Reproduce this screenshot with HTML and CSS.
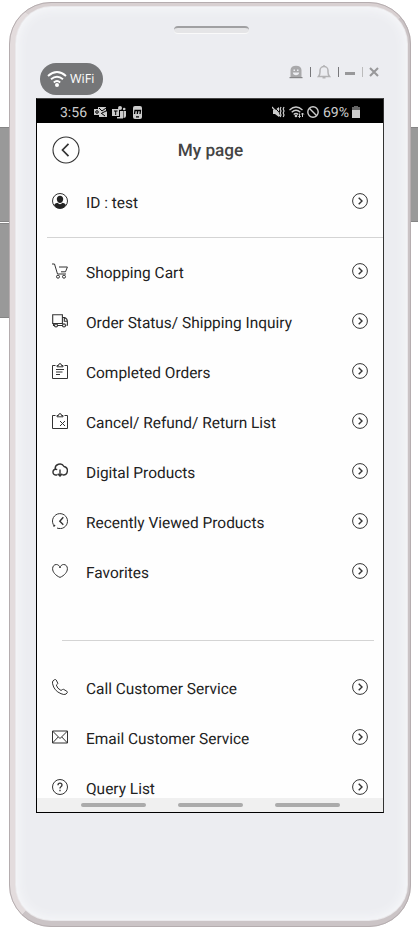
FILE: index.html
```html
<!DOCTYPE html>
<html lang="en">
<head>
<meta charset="utf-8">
<title>My page</title>
<link rel="stylesheet" href="styles.css">
</head>
<body>
<svg class="defs" width="0" height="0">
  <symbol id="go" viewBox="0 0 16 16"><circle cx="8" cy="8" r="7.4"/><path stroke-width="1.4" d="M6.7 4.7 10 8l-3.3 3.3"/></symbol>
</svg>
<div class="device">
  <div class="rail"><i class="key"></i><i class="key"></i></div>
  <div class="phone">
    <div class="speaker"></div>
    <header class="tools">
      <div class="wifi">
        <svg width="20" height="18" viewBox="0 0 20 18" fill="none" stroke="#fff" stroke-width="1.9"><path d="M1 6Q10-1.8 19 6M4 9.3q6-5 12 0M6.8 12.4q3.2-2.6 6.4 0"/><circle cx="10" cy="15" r="2" fill="#fff" stroke="none"/></svg>
        <span>WiFi</span>
      </div>
      <div class="window">
        <svg width="14" height="14" viewBox="0 0 14 14"><path fill="#a9a9ab" d="M1.500 12V5Q2 .8 7 .8T12.500 5v7z"/><path fill="#858587" d="M.5 12h13v1.2H.5z"/><path fill="#ecedf1" d="M4.500 4.500h1.500v1.500H4.500zM8 4.500h1.500v1.500H8zM3.800 7.500h6.400Q9.800 10.300 7 10.300T3.800 7.500z"/></svg>
        <i class="sep"></i>
        <svg width="14" height="14" viewBox="0 0 14 14" fill="none" stroke="#b3b3b5" stroke-width="1.5"><path d="M1.500 11.500Q3 9.800 3 7V5.500a4 4 0 0 1 8 0V7q0 2.800 1.500 4.500zM7 0v2M5.500 12.800h3"/></svg>
        <i class="sep"></i>
        <i class="minimize"></i>
        <i class="sep light"></i>
        <svg width="10" height="10" viewBox="0 0 10 10" fill="none" stroke="#98989a" stroke-width="2.1"><path d="m1 1 8 8M9 1 1 9"/></svg>
      </div>
    </header>
    <main class="screen">
      <div class="status">
        <span>3:56</span>
        <svg class="s-mail" width="13" height="12" viewBox="0 0 13 12"><path fill="#ccc" d="M4 1h8v4l1 1v5H5V9H0V3h4z"/><path fill="none" stroke="#000" d="M5 2l3 3 4-3M7 7l4 3M8 7l4-2"/><circle cx="3" cy="6" r="1.3" fill="none" stroke="#000"/></svg>
        <svg class="s-teams" width="14" height="13" viewBox="0 0 14 13"><path fill="#ccc" d="M0 3h7v7H0zM8 5h3v7.500H5V11h3zM11.500 5H14v5q0 2-2.500 2z"/><circle cx="8" cy="2" r="2" fill="#ccc"/><circle cx="12.2" cy="3" r="1.3" fill="#ccc"/><path stroke="#000" d="M2 5h3.500M3.700 5v4"/></svg>
        <svg class="s-app" width="9" height="13" viewBox="0 0 9 13"><rect width="9" height="13" rx="2" fill="#ccc"/><path fill="none" stroke="#000" stroke-width="1.3" d="M1.500 8 2 4.500h5.500L7 8M4.700 4.500 4.300 8M3 10.800h3"/></svg>
        <div class="status-right">
          <svg width="13" height="12" viewBox="0 0 13 12"><path fill="#ccc" d="M1 4h2l4-3v10L3 8H1z"/><path stroke="#000" d="M1.500 0l8 9"/><path fill="none" stroke="#ccc" stroke-width="1.2" d="M0 1l8 9"/><path fill="none" stroke="#ccc" stroke-width="1.2" d="M9 1l-.8 2 .8 2-.8 2 .8 2-.8 2M12 1l-.8 2 .8 2-.8 2 .8 2-.8 2"/></svg>
          <svg class="s-wifi" width="16" height="12" viewBox="0 0 16 12" fill="none" stroke="#ccc" stroke-width="1.3"><path d="M.5 4q6.500-6 13 0M2.700 6.300q4.300-4 8.600 0M4.700 8.500q2.300-2 4.600 0"/><path stroke-width="1" d="M10.500 7.500v4M9.300 10.200l1.200 1.300 1.200-1.300M13.500 11V7M12.200 8.500l1.300-1.500 1.300 1.500"/><circle cx="7" cy="10" r=".7"/></svg>
          <svg class="s-block" width="12" height="12" viewBox="0 0 12 12" fill="none" stroke="#ccc" stroke-width="1.4"><circle cx="6" cy="6" r="5.2"/><path d="m2.300 2.300 7.400 7.400"/></svg>
          <span>69%</span>
          <svg class="s-batt" width="8" height="12" viewBox="0 0 8 12"><path fill="#666" d="M2 0h4v1h2v4H0V1h2z"/><path fill="#ccc" d="M0 4h8v8H0z"/></svg>
        </div>
      </div>
      <div class="title">
        <svg width="28" height="28" viewBox="0 0 28 28" fill="none" stroke="#333"><circle cx="14" cy="14" r="13" stroke-width="1.1"/><path stroke-width="1.7" d="m16.500 7.900-6 6.100 6 6.100"/></svg>
        <h1>My page</h1>
      </div>
      <div class="list">
        <div class="row">
          <svg class="icon" viewBox="0 0 16 16"><circle cx="8" cy="8" r="7.5"/><path fill="#222" stroke="none" d="M8 2.700a3.200 3.200 0 0 1 3.200 3.500C11 8.400 9.700 10 8 10S5 8.400 4.800 6.200A3.200 3.200 0 0 1 8 2.700zM2 12q1-2 3.500-2.200Q8 12.500 10.500 9.800 13 10 14 12q-2 3.500-6 3.500T2 12z"/></svg>
          <span>ID : test</span><svg class="icon"><use href="#go"/></svg>
        </div>
        <hr class="wide">
        <div class="row">
          <svg class="icon" viewBox="0 0 16 16"><path d="M0 1h2.500l3 10H14M7 4h8.400L13.500 8.800H9"/><circle cx="6" cy="13.7" r="1.5"/><circle cx="12" cy="13.7" r="1.5"/></svg>
          <span>Shopping Cart</span><svg class="icon"><use href="#go"/></svg>
        </div>
        <div class="row">
          <svg class="icon" viewBox="0 0 16 16" stroke-width="1.1"><path d="M2.500 10.500H.7V1.800h9.700v8.700H.7M10.400 4.500h2.200q2.800 1.200 2.800 4v3.700h-1M12.300 5v3.300h3"/><path d="M1.500 10.500v2h1M5.700 12.500h4.800"/><circle cx="4" cy="12.4" r="1.5"/><circle cx="12" cy="12.4" r="1.5"/></svg>
          <span>Order Status/ Shipping Inquiry</span><svg class="icon"><use href="#go"/></svg>
        </div>
        <div class="row">
          <svg class="icon" viewBox="0 0 16 16"><path d="M3.500 2.500h-3v13h15v-13h-3M5 3.800h6V2.500H9.500Q9.500.6 8 .6T6.500 2.500H5zM4 6.500h8M4 9h6.500M4 11.500h4"/></svg>
          <span>Completed Orders</span><svg class="icon"><use href="#go"/></svg>
        </div>
        <div class="row">
          <svg class="icon" viewBox="0 0 16 16"><path d="M3.500 2.500h-3v13h15v-13h-3M5 3.800h6V2.500H9.500Q9.500.6 8 .6T6.500 2.500H5zM8 8l5 5M13 8l-5 5"/></svg>
          <span>Cancel/ Refund/ Return List</span><svg class="icon"><use href="#go"/></svg>
        </div>
        <div class="row">
          <svg class="icon" viewBox="0 0 16 16" stroke-width="1.4"><path d="M5.300 12H3.500a2.900 2.900 0 0 1-.3-5.700A4.700 4.700 0 0 1 12 3.500a4.300 4.300 0 0 1-.8 8.500h-.7M3.200 6.300q1-.3 2 .3M8 6.500V13M5.700 10.800 8 13l2.300-2.200"/></svg>
          <span>Digital Products</span><svg class="icon"><use href="#go"/></svg>
        </div>
        <div class="row">
          <svg class="icon" viewBox="0 0 16 16"><path d="M2.300 13A7.500 7.500 0 1 1 5 15M6.500 15.400h1"/><path stroke-width="1.4" d="m11.300 4.300-3.500 3.900 3.500 3.500"/><path stroke-width="1.5" d="M1.500 13.500 3 12"/></svg>
          <span>Recently Viewed Products</span><svg class="icon"><use href="#go"/></svg>
        </div>
        <div class="row">
          <svg class="icon" viewBox="0 0 16 16"><path d="M8 14.400C3.500 12.500.6 9 .6 5.700.6 3.200 2.200 1.500 4.300 1.500 6.300 1.500 7.700 3 8 5c.3-2 1.700-3.500 3.700-3.500 2.100 0 3.700 1.700 3.700 4.200 0 3.300-2.900 6.800-7.400 8.700z"/></svg>
          <span>Favorites</span><svg class="icon"><use href="#go"/></svg>
        </div>
        <hr class="inset">
        <div class="row">
          <svg class="icon" viewBox="0 0 16 16"><path d="M1 1.800 2.700.6q.9-.4 1.500.4l1.500 3q.3.800-.4 1.300l-1 .8q.7 3.200 4.700 5.400l1.500-1q.6-.4 1.200-.1l3.200 1.900q.8.500.4 1.300l-1.300 1.500q-2 1-5-.4Q2 11.800.6 4.800.2 2.700 1 1.800z"/></svg>
          <span>Call Customer Service</span><svg class="icon"><use href="#go"/></svg>
        </div>
        <div class="row">
          <svg class="icon" viewBox="0 0 16 16"><path d="M.5 2h15v12H.5zM.5 2 8 9.500 15.500 2M.5 14l5.700-6M15.500 14 9.800 8"/></svg>
          <span>Email Customer Service</span><svg class="icon"><use href="#go"/></svg>
        </div>
        <div class="row">
          <svg class="icon" viewBox="0 0 16 16"><circle cx="8" cy="8" r="7.5"/><path stroke-width="1.3" d="M6 6.200Q6 4.200 8 4.200t2 1.900Q10 7 8.900 7.800 8 8.400 8 9.500M8 10.800v1.400"/></svg>
          <span>Query List</span><svg class="icon"><use href="#go"/></svg>
        </div>
      </div>
      <nav><i></i><i></i><i></i></nav>
    </main>
  </div>
  <div class="rail"><i class="key"></i></div>
</div>
</body>
</html>
```

FILE: styles.css
```css
* { box-sizing: border-box; }

body {
  margin: 0;
  background: #fff;
  font-family: Roboto, "Liberation Sans", sans-serif;
  text-rendering: geometricPrecision;
  overflow: hidden;
}

svg { display: block; flex: none; }
.defs { display: none; }

.device {
  display: grid;
  grid-template-columns: 9px 402px 7px;
  width: 418px;
  height: 930px;
}

.rail {
  display: flex;
  flex-direction: column;
  gap: 1px;
  padding-top: 127px;
}

.key {
  height: 95px;
  background: #999;
  border: 1px solid #858585;
  border-width: 1px 0;
}

.phone {
  height: 925px;
  margin-top: 2px;
  padding: 20px 24px 0 21px;
  border: 1px solid;
  border-width: 4px 3px 6px 6px;
  border-color: #d8d0d1 #cac3c5 #cbc4c6 #e3dcdd;
  border-radius: 42px;
  background: #ecedf1;
  box-shadow: inset 0 0 12px 2px #f8f9fb, inset 0 0 0 1px #d5d0d2;
  outline: 1px solid #b5adaf;
  outline-offset: -1px;
}

.speaker {
  width: 75px;
  height: 8px;
  margin-left: 138px;
  border-radius: 4px;
  border-top: 2px solid #a0a0a2;
  border-bottom: 1px solid #fafafa;
  background: #e5e5e7;
}

.tools {
  display: flex;
  justify-content: space-between;
  height: 32px;
  margin: 29px 5px 3px 4px;
}

.wifi {
  display: flex;
  align-items: center;
  gap: 3px;
  width: 63px;
  padding-left: 7px;
  border-radius: 16px;
  background: #757678;
  color: #fff;
  font: 12.5px "Open Sans", sans-serif;
}

.wifi span { margin-top: -1px; }

.window {
  display: flex;
  align-items: center;
  height: 18px;
}

.sep {
  width: 1px;
  height: 10px;
  margin: 0 6px 0 7px;
  background: #77777a;
}

.sep.light { background: #bbb; }
.minimize { width: 10px; height: 3px; margin-top: 2px; background: #98989a; }

.screen {
  display: flex;
  flex-direction: column;
  width: 348px;
  height: 715px;
  border: 1px solid;
  border-color: #444 #333 #000 #000;
  background: #fefefe;
  overflow: hidden;
}

.status {
  display: flex;
  align-items: center;
  flex: none;
  height: 24px;
  padding: 2px 23px 0 23px;
  background: #000;
  color: #ccc;
  font-size: 14px;
}

.status span { margin-top: 2px; }

.s-mail { margin-left: 7px; }
.s-teams { margin-left: 5px; }
.s-app { margin-left: 7px; }

.status-right {
  display: flex;
  align-items: center;
  margin-left: auto;
}

.s-wifi { margin-left: 4px; }
.s-block { margin: 0 4px 0 2px; }
.s-batt { margin-left: 3px; }

.title {
  display: grid;
  grid-template-columns: 28px 1fr 28px;
  align-items: center;
  flex: none;
  height: 54px;
  padding: 0 14px 0 15px;
}

.title svg { margin-top: -1px; }

.title h1 {
  margin: 1px 0 0;
  color: #444;
  font-size: 17.2px;
  font-weight: 500;
  text-align: center;
}

.list {
  flex: 1;
  min-height: 0;
  overflow: hidden;
}

.row {
  display: flex;
  align-items: center;
  height: 50px;
  padding: 0 15px;
  color: #222;
  font-size: 15.45px;
}

.row span {
  flex: 1;
  margin: 2px 0 0 18px;
}

.icon {
  width: 16px;
  height: 16px;
  margin-top: -2px;
  fill: none;
  stroke: #333;
}

hr {
  height: 1px;
  border: 0;
  background: #d4d4d4;
}

.wide { margin: 10px 0 9px 10px; }
.inset { margin: 43px 9px 22px 25px; }

nav {
  display: flex;
  gap: 32px;
  flex: none;
  height: 14px;
  padding: 5px 0 0 44px;
  background: #f0f0f0;
}

nav i {
  width: 65px;
  height: 4px;
  border-radius: 2px;
  background: #ababab;
}
```
